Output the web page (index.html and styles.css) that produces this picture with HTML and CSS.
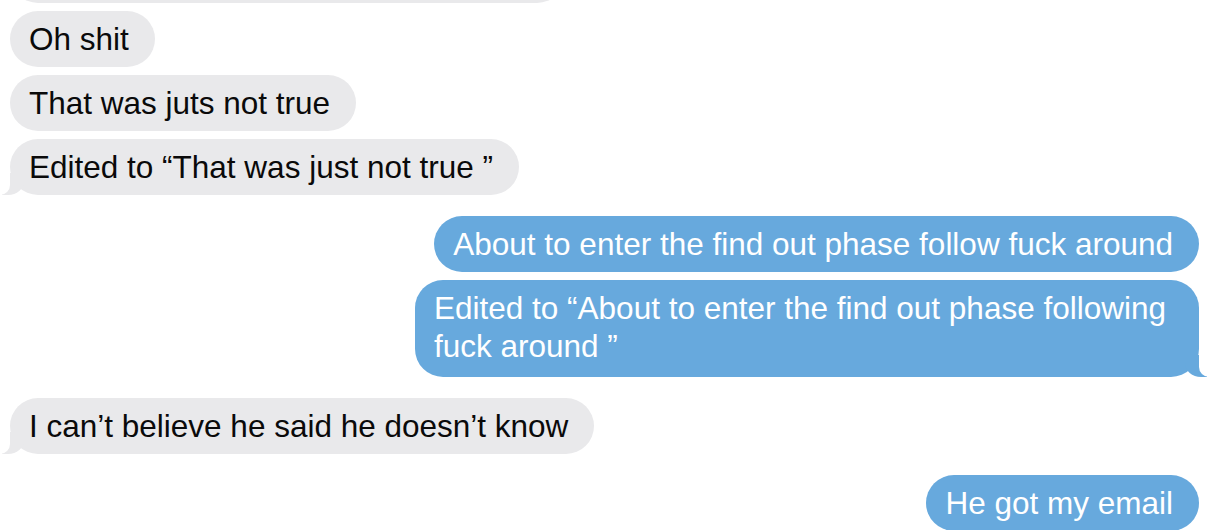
FILE: index.html
```html
<!DOCTYPE html>
<html>
<head>
<meta charset="utf-8">
<link rel="stylesheet" href="styles.css">
</head>
<body>
<div class="thread">
  <div class="row in"><div class="bubble gray ghost"></div></div>
  <div class="row in"><div class="bubble gray">Oh shit</div></div>
  <div class="row in"><div class="bubble gray">That was juts not true</div></div>
  <div class="row in"><div class="bubble gray tail">Edited to “That was just not true ”</div></div>
  <div class="row out group"><div class="bubble blue">About to enter the find out phase follow fuck around</div></div>
  <div class="row out"><div class="bubble blue tail multi">Edited to “About to enter the find out phase following fuck around ”</div></div>
  <div class="row in group"><div class="bubble gray tail">I can’t believe he said he doesn’t know</div></div>
  <div class="row out group"><div class="bubble blue">He got my email</div></div>
</div>
</body>
</html>
```
FILE: styles.css
```css
html, body {
  margin: 0;
  padding: 0;
  background: #ffffff;
  overflow: hidden;
}
body {
  width: 1218px;
  height: 530px;
  font-family: "Liberation Sans", Arial, sans-serif;
}
.thread {
  display: flex;
  flex-direction: column;
  gap: 8px;
  padding: 0 19px 0 10px;
}
.row {
  display: flex;
}
.row.in { justify-content: flex-start; }
.row.out { justify-content: flex-end; }
.row.group { margin-top: 13px; }
.bubble {
  position: relative;
  box-sizing: border-box;
  min-height: 56px;
  padding: 9px 26px 9px 19px;
  border-radius: 28px;
  font-size: 31.5px;
  line-height: 38px;
  display: flex;
  align-items: center;
  white-space: nowrap;
}
.bubble.gray {
  background: #e9e9eb;
  color: #0a0a0a;
}
.bubble.blue {
  background: #67a9dd;
  color: #ffffff;
}
.bubble.blue.wide {
  padding-left: 22px;
}
.bubble.ghost {
  width: 555px;
  margin-top: -53px;
}
.bubble.multi {
  white-space: normal;
  max-width: 784px;
  padding-top: 9px;
  padding-bottom: 12px;
}
.bubble.tail::before,
.bubble.tail::after {
  content: "";
  position: absolute;
  bottom: 0;
  height: 22px;
}
.row.in .bubble.tail::before {
  left: -8px;
  width: 22px;
  background: #e9e9eb;
  border-bottom-right-radius: 16px 14px;
}
.row.in .bubble.tail::after {
  left: -12px;
  width: 12px;
  background: #ffffff;
  border-bottom-right-radius: 10px;
}
.row.out .bubble.tail::before {
  right: -8px;
  width: 22px;
  background: #67a9dd;
  border-bottom-left-radius: 16px 14px;
}
.row.out .bubble.tail::after {
  right: -12px;
  width: 12px;
  background: #ffffff;
  border-bottom-left-radius: 10px;
}
```
